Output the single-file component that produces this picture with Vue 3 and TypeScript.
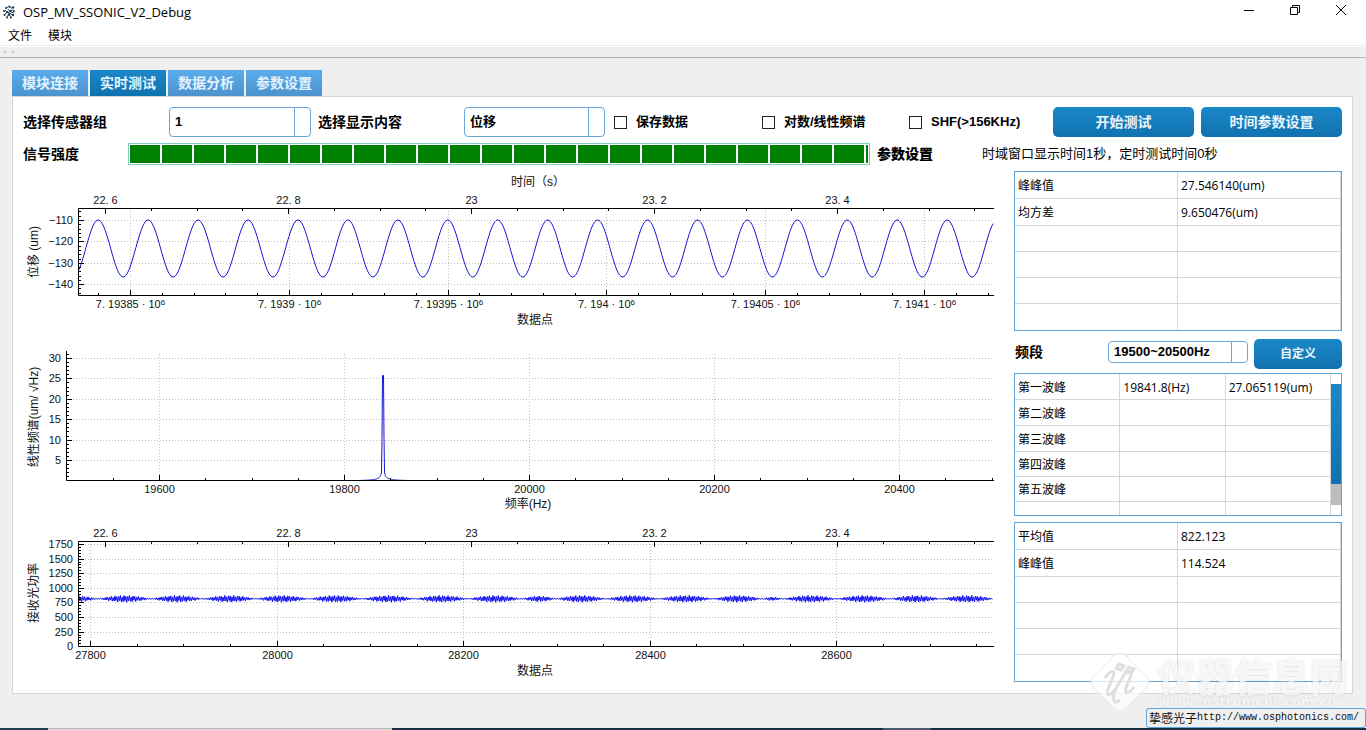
<script setup lang="ts">
import { ref } from 'vue'

interface Tick { pos: number; label: string }

const tabs = ['模块连接', '实时测试', '数据分析', '参数设置']
const activeTab = ref(1)
const sensorGroup = ref('1')
const displayItem = ref('位移')
const band = ref('19500~20500Hz')
const saveData = ref(false)
const logSpectrum = ref(false)
const shf = ref(false)

const statRows = [['峰峰值', '27.546140(um)'], ['均方差', '9.650476(um)'], ['', ''], ['', ''], ['', ''], ['', '']]
const peakRows = [
  ['第一波峰', '19841.8(Hz)', '27.065119(um)'],
  ['第二波峰', '', ''],
  ['第三波峰', '', ''],
  ['第四波峰', '', ''],
  ['第五波峰', '', ''],
  ['', '', ''],
]
const powerRows = [['平均值', '822.123'], ['峰峰值', '114.524'], ['', ''], ['', ''], ['', ''], ['', '']]

const RIGHT = 994

function series(start: number, step: number, labels: string[]): Tick[] {
  return labels.map((label, i) => ({ pos: Math.round(start + step * i) + 0.5, label }))
}

// Tick marks along a horizontal axis; dir is 1 for downwards, -1 for upwards.
function hTicks(origin: number, step: number, min: number, max: number, y: number, len: number, dir: number): string {
  let d = ''
  const first = Math.ceil((min - origin) / step)
  for (let i = first; origin + i * step <= max; i++) {
    d += `M${Math.round(origin + i * step) + 0.5} ${y}v${len * dir}`
  }
  return d
}

function vTicks(origin: number, step: number, min: number, max: number, x: number, len: number): string {
  let d = ''
  const first = Math.ceil((min - origin) / step)
  for (let i = first; origin + i * step <= max; i++) {
    d += `M${x} ${Math.round(origin + i * step) + 0.5}h${len}`
  }
  return d
}

const timeTicks = series(105, 183, ['22. 6', '22. 8', '23', '23. 2', '23. 4'])
const pointTicks = series(130, 158.8, ['7. 19385', '7. 1939', '7. 19395', '7. 194', '7. 19405', '7. 1941'])
const shiftTicks = series(220, 21.4, ['−110', '−120', '−130', '−140'])
const freqTicks = series(159, 185, ['19600', '19800', '20000', '20200', '20400'])
const ampTicks = series(358, 20.4, ['30', '25', '20', '15', '10', '5'])
const sampleTicks = series(90, 186.6, ['27800', '28000', '28200', '28400', '28600'])
const powerTicks = series(544, 14.6, ['1750', '1500', '1250', '1000', '750', '500', '250', '0'])

const shiftAxes =
  hTicks(105, 183, 79, RIGHT, 208, 6, 1) + hTicks(105, 45.75, 79, RIGHT, 208, 3, 1) +
  hTicks(130, 158.8, 79, RIGHT, 295, 5, -1) + hTicks(130, 31.76, 79, RIGHT, 295, 2, -1) +
  vTicks(220, 21.4, 209, 294, 79, 5) + vTicks(220, 4.28, 209, 294, 79, 2)
const specAxes =
  hTicks(159, 185, 67, RIGHT, 480, 5, -1) + hTicks(159, 46.25, 67, RIGHT, 480, 2, -1) +
  vTicks(358, 20.4, 352, 479, 67, 5) + vTicks(358, 4.08, 352, 479, 67, 2)
const powerAxes =
  hTicks(105, 183, 79, RIGHT, 541, 6, 1) + hTicks(105, 45.75, 79, RIGHT, 541, 3, 1) +
  hTicks(90, 186.6, 79, RIGHT, 646, 5, -1) + hTicks(90, 46.65, 79, RIGHT, 646, 2, -1) +
  vTicks(544, 14.6, 542, 645, 79, 5) + vTicks(544, 2.92, 542, 645, 79, 2)

function shiftCurve(): string {
  const pts: string[] = []
  for (let x = 79; x <= 993; x++) {
    pts.push(`${x},${(248.5 - 28.5 * Math.cos(((x - 98.2) / 49.94) * 2 * Math.PI)).toFixed(1)}`)
  }
  return pts.join(' ')
}

function spectrumCurve(): string {
  const pts: string[] = []
  for (let x = 67; x <= 993; x += 0.5) {
    const d = Math.abs(x - 383)
    const h = d <= 0.5 ? 105 : 12 / (d * 0.9) + (d < 1.2 ? 30 : 0) - 0.5
    pts.push(`${x},${(480.5 - Math.max(0, h)).toFixed(1)}`)
  }
  return pts.join(' ')
}

const nodes = [45, 98, 151, 203, 256, 309, 362, 415, 468, 522, 556, 606, 659, 713, 762, 783, 837, 890, 941, 994]

function powerCurve(): string {
  const pts: string[] = []
  let k = 0
  for (let i = 0; 79 + i * 0.9 <= 993; i++) {
    const x = 79 + i * 0.9
    while (x > nodes[k + 1]) k++
    const span = nodes[k + 1] - nodes[k]
    const env = 0.1 + 3.4 * Math.sin((Math.PI * (x - nodes[k])) / span) * Math.min(1, span / 40)
    const s = i % 2 ? 1 : -1
    pts.push(`${x.toFixed(1)},${(598.8 + s * env * (0.75 + 0.25 * Math.cos(i * 1.9))).toFixed(1)}`)
  }
  return pts.join(' ')
}

const shiftPoints = shiftCurve()
const spectrumPoints = spectrumCurve()
const powerPoints = powerCurve()
</script>

<template>
  <div class="window">
    <header class="titlebar">
      <svg class="app-icon" viewBox="0 0 14 14" aria-hidden="true">
        <g fill="none" stroke="#2a4a63" stroke-width="1">
          <path d="M4 3l3-1.500 3 2M3 5l2 2-2.500 3M6 4l2 2.500L11 5M5 7.500l3 .5 3 3M5 12l2-3 2 3.500M9 7l3 1" />
        </g>
        <g fill="#1c3b56">
          <circle cx="4" cy="3" r="1" /><circle cx="7.500" cy="1.600" r="1" /><circle cx="11" cy="2.500" r="1.200" />
          <circle cx="2" cy="6" r="1.100" /><circle cx="5.500" cy="7" r="1" /><circle cx="8.500" cy="6" r="1.200" />
          <circle cx="12" cy="6" r="1" /><circle cx="2.500" cy="10" r="1" /><circle cx="7" cy="9.500" r="1.200" />
          <circle cx="11" cy="10" r="1.200" /><circle cx="5" cy="12.500" r="1" /><circle cx="9" cy="12.600" r="1" />
        </g>
      </svg>
      <h1>OSP_MV_SSONIC_V2_Debug</h1>
      <div class="window-buttons">
        <button type="button" aria-label="最小化"><svg viewBox="0 0 12 12"><path d="M1 6.500h10" /></svg></button>
        <button type="button" aria-label="还原"><svg viewBox="0 0 12 12"><path d="M1.500 3.500h7v7h-7zM3.500 3V1.500h7v7H9" /></svg></button>
        <button type="button" aria-label="关闭"><svg viewBox="0 0 12 12"><path d="M1 1l10 10M11 1L1 11" /></svg></button>
      </div>
    </header>
    <nav class="menubar">
      <button type="button">文件</button>
      <button type="button">模块</button>
    </nav>
    <div class="toolstrip"><i></i><i></i></div>

    <main class="workspace">
      <div class="tabs" role="tablist">
        <button
          v-for="(t, i) in tabs" :key="t" type="button" role="tab"
          :aria-selected="i === activeTab" :class="{ active: i === activeTab }" @click="activeTab = i"
        >{{ t }}</button>
      </div>

      <section class="panel">
        <div class="controls">
          <label for="group">选择传感器组</label>
          <div class="cell"><select id="group" v-model="sensorGroup"><option>1</option><option>2</option></select></div>
          <label for="item">选择显示内容</label>
          <div class="cell wide-gap"><select id="item" v-model="displayItem"><option>位移</option><option>速度</option></select></div>
          <label class="check"><input v-model="saveData" type="checkbox" /><span>保存数据</span></label>
          <label class="check"><input v-model="logSpectrum" type="checkbox" /><span>对数/线性频谱</span></label>
          <label class="check"><input v-model="shf" type="checkbox" /><span>SHF(&gt;156KHz)</span></label>
          <div class="cell"><button type="button" class="primary">开始测试</button></div>
          <button type="button" class="primary">时间参数设置</button>
        </div>

        <div class="signal">
          <label for="strength">信号强度</label>
          <div class="cell"><progress id="strength" max="100" value="100"></progress></div>
          <strong>参数设置</strong>
          <span class="status">时域窗口显示时间1秒，定时测试时间0秒</span>
        </div>

        <div class="body">
          <div class="charts">
            <svg viewBox="13 171 1001 160" role="img" aria-label="位移">
              <path class="grid" :d="shiftTicks.map(t => `M79 ${t.pos}H${RIGHT}`).join('') + pointTicks.map(t => `M${t.pos} 211V295`).join('')" />
              <polyline class="curve" :points="shiftPoints" />
              <path class="axis" d="M994 208.500H78.500V295.500H994" />
              <path class="axis" :d="shiftAxes" />
              <text x="538" y="186" class="mid title">时间（s）</text>
              <text v-for="t in timeTicks" :key="t.label" :x="t.pos" y="204" class="mid">{{ t.label }}</text>
              <text v-for="t in shiftTicks" :key="t.label" x="73" :y="t.pos + 3.5" class="end">{{ t.label }}</text>
              <text v-for="t in pointTicks" :key="t.label" :x="t.pos" y="308" class="mid">{{ t.label }} · 10<tspan class="sup" dy="-3">6</tspan></text>
              <text x="535" y="324" class="mid title">数据点</text>
              <text transform="translate(38 252) rotate(-90)" class="mid title">位移 (um)</text>
            </svg>

            <svg viewBox="13 339 1001 177" role="img" aria-label="线性频谱">
              <path class="grid" :d="ampTicks.map(t => `M67 ${t.pos}H${RIGHT}`).join('') + freqTicks.map(t => `M${t.pos} 354V480`).join('')" />
              <polyline class="curve" :points="spectrumPoints" />
              <path class="axis" d="M66.500 351V480.500H994" />
              <path class="axis" :d="specAxes" />
              <text v-for="t in ampTicks" :key="t.label" x="61" :y="t.pos + 3.5" class="end">{{ t.label }}</text>
              <text v-for="t in freqTicks" :key="t.label" :x="t.pos" y="493" class="mid">{{ t.label }}</text>
              <text x="528" y="508" class="mid title">频率(Hz)</text>
              <text transform="translate(38 417) rotate(-90)" class="mid title">线性频谱(um/ √Hz)</text>
            </svg>

            <svg viewBox="13 522 1001 160" role="img" aria-label="接收光功率">
              <path class="grid" :d="powerTicks.map(t => `M79 ${t.pos}H${RIGHT}`).join('') + sampleTicks.map(t => `M${t.pos} 544V646`).join('')" />
              <polyline class="curve strong" :points="powerPoints" />
              <path class="axis" d="M994 541.500H78.500V646.500H994" />
              <path class="axis" :d="powerAxes" />
              <text v-for="t in timeTicks" :key="t.label" :x="t.pos" y="537" class="mid">{{ t.label }}</text>
              <text v-for="t in powerTicks" :key="t.label" x="73" :y="t.pos + 3.5" class="end">{{ t.label }}</text>
              <text v-for="t in sampleTicks" :key="t.label" :x="t.pos" y="659" class="mid">{{ t.label }}</text>
              <text x="535" y="675" class="mid title">数据点</text>
              <text transform="translate(38 593) rotate(-90)" class="mid title">接收光功率</text>
            </svg>
          </div>

          <aside class="side">
            <table class="data two">
              <tbody>
                <tr v-for="(r, i) in statRows" :key="i"><td v-for="(c, j) in r" :key="j">{{ c }}</td></tr>
              </tbody>
            </table>

            <div class="band">
              <label for="band">频段</label>
              <div class="cell"><select id="band" v-model="band"><option>19500~20500Hz</option></select></div>
              <button type="button" class="primary small">自定义</button>
            </div>

            <div class="peaks">
              <table class="data three">
                <tbody>
                  <tr v-for="(r, i) in peakRows" :key="i"><td v-for="(c, j) in r" :key="j">{{ c }}</td></tr>
                </tbody>
              </table>
              <div class="scroll"><div class="thumb"></div><div class="track"></div></div>
            </div>

            <table class="data two">
              <tbody>
                <tr v-for="(r, i) in powerRows" :key="i"><td v-for="(c, j) in r" :key="j">{{ c }}</td></tr>
              </tbody>
            </table>
          </aside>
        </div>
      </section>
    </main>

    <footer class="statusbar">
      <a href="#"><span class="cn">挚感光子</span><span>http://www.osphotonics.com/</span></a>
    </footer>
    <div class="taskline"><i class="a"></i><i class="b"></i><i class="c"></i><i class="d"></i><i class="e"></i></div>

    <div class="watermark" aria-hidden="true">
      <svg viewBox="0 0 64 64">
        <path d="M27 5q5-4 10 0l22 22q4 5 0 10L37 59q-5 4-10 0L5 37q-4-5 0-10z" fill="#fff" fill-opacity=".7" stroke="#e8e8e8" />
        <path d="M17 28c5-8 11-9 8-1l-5 12c-3 8 3 7 8-1l8-13c5-6 9-4 6 3l-4 10c-2 7 3 6 8-1M28 39c-5 9-2 17 4 11M31 14l5 2-3 4-5-2zM41 17l5 2-3 4-5-2z" fill="none" stroke="#dfdfdf" stroke-width="3" />
      </svg>
      <div><b>仪器信息网</b><small>www.instrument.com.cn</small></div>
    </div>
  </div>
</template>

<style>
html, body { margin: 0; background: #efefef; }
</style>

<style scoped>
* { box-sizing: border-box; }
.window {
  position: relative;
  display: flex;
  flex-direction: column;
  min-height: 100vh;
  background: #efefef;
  color: #000;
  font: 12px/16px "Open Sans", "Noto Sans CJK SC", sans-serif;
}
button, select { font: inherit; color: inherit; }
button { border: 0; padding: 0; background: none; }

.titlebar { display: flex; align-items: center; height: 24px; padding: 0 2px; background: #fff; }
.app-icon { width: 14px; height: 14px; margin-right: 7px; }
h1 { margin: 0; font-size: 13px; font-weight: 400; }
.window-buttons { display: flex; margin-left: auto; height: 20px; align-self: flex-start; }
.window-buttons button { width: 46px; display: grid; place-items: center; }
.window-buttons svg { width: 12px; height: 12px; fill: none; stroke: #000; }

.menubar { display: flex; gap: 16px; height: 22px; padding: 2px 8px 0; background: #fff; border-bottom: 1px solid #ececec; }
.toolstrip { display: flex; gap: 6px; height: 12px; padding: 4px; border-top: 1px solid #fff; border-bottom: 1px solid #b4b4b4; }
.toolstrip i { width: 2px; height: 2px; background: #c4c4c4; }

.workspace { padding: 12px 13px 0 12px; }
.tabs { display: flex; gap: 2px; height: 26px; }
.tabs button {
  width: 76px;
  font-size: 14px;
  font-weight: 700;
  color: #e4f2fd;
  background: linear-gradient(#5aacec, #4d92cd);
}
.tabs .active { background: linear-gradient(#1b87c9, #1072b0); }

.panel { padding: 10px 10px 11px 0; background: #fff; border: 1px solid #d6d6d6; }
.controls, .signal {
  display: grid;
  align-items: center;
  padding-left: 10px;
  font-family: "Liberation Sans", "Noto Sans CJK SC", sans-serif;
  font-size: 14px;
  font-weight: 700;
  white-space: nowrap;
}
.controls { grid-template-columns: 146fr 149fr 146fr 150fr 148fr 147fr 144fr 148fr 141fr; height: 30px; }
.signal { grid-template-columns: 105fr 749fr 105fr 360fr; height: 22px; margin: 6px 0; }
.controls > *, .signal > * { min-width: 0; }
.cell { display: flex; padding-right: 7px; }
.wide-gap { padding-right: 9px; }
.cell > * { flex: 1; min-width: 0; }
.controls select { height: 30px; }
select {
  appearance: none;
  width: 100%;
  padding: 0 20px 0 5px;
  font-family: "Liberation Sans", "Noto Sans CJK SC", sans-serif;
  font-size: 13px;
  font-weight: 700;
  border: 1px solid #6aa6d8;
  border-radius: 4px;
  background: linear-gradient(#6aa6d8, #6aa6d8) right 15px top / 1px 100% no-repeat #fff;
}
.check { display: flex; align-items: center; gap: 9px; }
.check input { appearance: none; width: 13px; height: 13px; margin: 0; border: 1px solid #222; background: #fff; }
.check input:checked { background: #1b87c9; }
.check span { font-size: 13px; }
.primary {
  height: 30px;
  color: #eaf5fd;
  font-size: 14px;
  font-weight: 700;
  border-radius: 5px;
  background: linear-gradient(#1b87c9, #1072b0);
}
.primary.small { font-size: 12px; }

progress {
  appearance: none;
  display: block;
  height: 22px;
  padding: 1px;
  border: 1px solid #86c8c6;
  background: #fff;
}
progress::-webkit-progress-bar { background: #fff; }
progress::-webkit-progress-value { background: repeating-linear-gradient(to right, #008000 0 30px, #fff 30px 32px); }
.status { font-size: 13px; font-weight: 400; }

.body { display: grid; grid-template-columns: 1001fr 328fr; align-items: start; }
.charts { display: flex; flex-direction: column; min-width: 0; }
.charts svg { display: block; width: 100%; height: auto; }
.charts svg:nth-child(1) { margin-bottom: 8px; }
.charts svg:nth-child(2) { margin-bottom: 6px; }
.axis { fill: none; stroke: #000; stroke-width: 1; }
.grid { fill: none; stroke: #c0c0c0; stroke-width: 1; stroke-dasharray: 1 2; }
.curve { fill: none; stroke: #1414d8; stroke-width: 1; }
.strong { stroke: #0c0cf5; }
text { font: 11px "Liberation Sans", "Noto Sans CJK SC", sans-serif; fill: #111; }
.title { font-size: 12px; }
.sup { font-size: 8px; }
.mid { text-anchor: middle; }
.end { text-anchor: end; }

.side { display: flex; flex-direction: column; min-width: 0; }
.data { width: 100%; table-layout: fixed; border-spacing: 0; }
.data td { height: 26px; padding: 2px 3px 0; border-right: 1px solid #d6d6d6; border-bottom: 1px solid #d6d6d6; white-space: nowrap; }
.two { border: 1px solid #62a3d8; }
.two tr:nth-child(-n + 2) td { height: 27px; }
.two tr:last-child td { border-bottom: 0; }
.peaks { display: flex; height: 143px; overflow: hidden; border: 1px solid #62a3d8; margin-bottom: 6px; }
.three tr:nth-child(n + 4) td { height: 25px; }
.scroll { flex: 0 0 10px; padding-top: 10px; }
.thumb { height: 100px; background: linear-gradient(#1b87c9, #1072b0); }
.track { height: 21px; background: #bdbdbd; }
.band { display: grid; grid-template-columns: 94fr 146fr 88fr; align-items: center; margin: 8px 0 4px; font-size: 14px; font-weight: 700; }
.band > * { min-width: 0; }
.band label { padding: 0 0 4px 1px; }
.band .cell { padding-right: 6px; padding-bottom: 4px; }
.band select { height: 22px; }

.statusbar { display: flex; justify-content: flex-end; margin-top: auto; }
.statusbar a {
  position: relative;
  z-index: 2;
  display: flex;
  align-items: center;
  height: 20px;
  padding: 0 6px 0 2px;
  font: 10px/16px "Liberation Mono", monospace;
  color: #111;
  text-decoration: none;
  white-space: nowrap;
  border: 1px solid #62a3d8;
  border-radius: 3px;
  background: #efefef;
}
.cn { font: 12px/16px "Noto Sans CJK SC", sans-serif; }
.taskline { display: flex; height: 2px; background: #1a2c40; }
.a { width: 48px; background: #203a50; }
.b { width: 344px; background: #dedede; border-top: 1px solid #b8b8b8; }
.c { flex: 491; }
.d { flex: 48; background: #4c5b6b; }
.e { flex: 435; }

.watermark { position: absolute; right: 18px; bottom: 16px; display: flex; align-items: center; gap: 6px; pointer-events: none; color: rgba(255, 255, 255, 0.75); }
.watermark svg { width: 64px; height: 64px; }
.watermark div { display: flex; flex-direction: column; }
.watermark b { font: 900 38px/40px "Noto Sans CJK SC", sans-serif; text-shadow: 0 0 3px rgba(0, 0, 0, 0.14); }
.watermark small { font: 700 13px/14px "DejaVu Sans", sans-serif; text-shadow: 0 0 2px rgba(0, 0, 0, 0.14); }
</style>
